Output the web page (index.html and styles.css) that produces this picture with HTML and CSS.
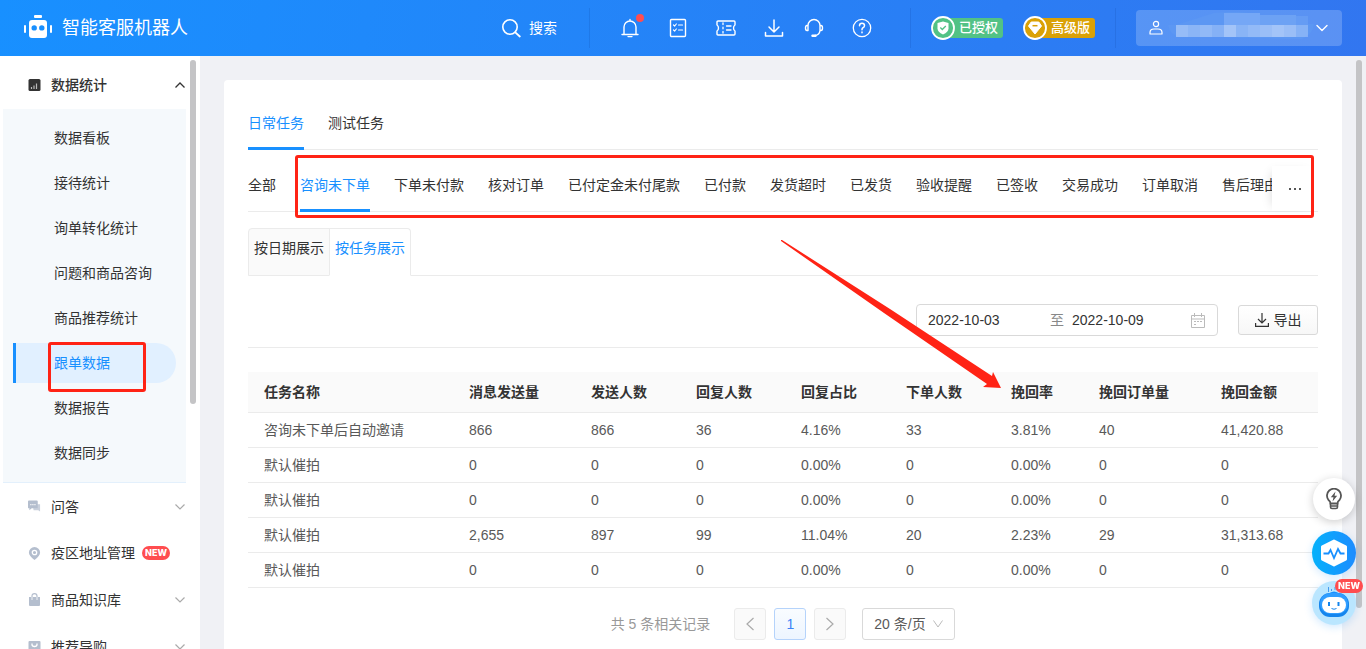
FILE: index.html
```html
<!DOCTYPE html>
<html lang="zh-CN">
<head>
<meta charset="utf-8">
<title>智能客服机器人</title>
<link rel="stylesheet" href="styles.css">
</head>
<body>
<header class="topbar">
  <a class="brand" href="#">
    <svg width="28" height="26" viewBox="0 1 28 26" fill="#fff"><rect x="10" y="1" width="8" height="3" rx="1"/><rect x="0" y="11" width="2" height="8" rx="1"/><rect x="26" y="11" width="2" height="8" rx="1"/><path fill-rule="evenodd" d="M8 6h12a3 3 0 0 1 3 3v12a3 3 0 0 1-3 3H8a3 3 0 0 1-3-3V9a3 3 0 0 1 3-3zm2.200 5.200a2.700 2.700 0 1 0 0 5.400 2.700 2.700 0 0 0 0-5.400zm7.600 0a2.700 2.700 0 1 0 0 5.400 2.700 2.700 0 0 0 0-5.400z"/></svg>
    <span>智能客服机器人</span>
  </a>
  <button class="search" type="button">
    <svg width="20" height="20" viewBox="0 0 20 20" class="line"><circle cx="9" cy="9" r="7.200" stroke-width="1.600"/><path d="M14.300 14.300l4.500 4.200" stroke-width="1.800"/></svg>
    <span>搜索</span>
  </button>
  <i class="split"></i>
  <nav class="tools">
    <button type="button" class="tool" aria-label="通知">
      <svg width="20" height="20" viewBox="0 0 20 20" class="line"><path d="M2 16.500h16M4 16.300V9a6 6 0 0 1 12 0v7.300M10 3V1.500M8 18.600h4" stroke-width="1.400"/></svg>
      <i class="dot"></i>
    </button>
    <button type="button" class="tool" aria-label="任务">
      <svg width="20" height="20" viewBox="0 0 20 20" class="line"><rect x="2.500" y="1.500" width="15" height="17" rx="1" stroke-width="1.400"/><path d="M5.500 7l1.200 1 1.600-2M10.500 7h4M5.500 12l1.200 1 1.600-2M10.500 12h4" stroke-width="1.200"/></svg>
    </button>
    <button type="button" class="tool" aria-label="卡券">
      <svg width="20" height="20" viewBox="0 0 20 20" class="line"><path d="M2 3h16q1 0 1 1v3q-1.500.8-1.500 3t1.500 3v3q0 1-1 1H2q-1 0-1-1v-3q1.500-.8 1.500-3T1 7V4q0-1 1-1z" stroke-width="1.400"/><path d="M7 5v1.500M7 9.200v1.600M7 13.500V15M10.500 8h4.500M10.500 12h4.500" stroke-width="1.300"/></svg>
    </button>
    <button type="button" class="tool" aria-label="下载">
      <svg width="20" height="20" viewBox="0 0 20 20" class="line"><path d="M10 2v12M5 9l5 5 5-5M1.500 14.500v3.500h17v-3.500" stroke-width="1.500"/></svg>
    </button>
    <button type="button" class="tool near" aria-label="客服">
      <svg width="20" height="20" viewBox="0 0 20 20" class="line"><path d="M4 12.500V7.500a6 6 0 0 1 12 0v5M4 7.500H3Q1.500 7.500 1.500 10T3 12.500h1M16 7.500h1q1.500 0 1.500 2.500T17 12.500h-1Q15.500 17 11 17.500" stroke-width="1.400"/><path d="M8.500 17.700h3" stroke-width="2.400"/></svg>
    </button>
    <button type="button" class="tool" aria-label="帮助">
      <svg width="20" height="20" viewBox="0 0 20 20" class="line"><circle cx="10" cy="10" r="8.700" stroke-width="1.300"/><path d="M7.500 7.700q0-2.500 2.500-2.500t2.500 2.300q0 1.500-1.500 2.200-1 .6-1 2M10 14v.8" stroke-width="1.500"/></svg>
    </button>
  </nav>
  <i class="split"></i>
  <div class="levels">
    <span class="level green">
      <svg width="24" height="24" viewBox="0 0 24 24"><circle cx="12" cy="12" r="11" fill="#52c285" stroke="#fff" stroke-width="1.800"/><path d="M12 5.500l5.500 1.500v5.500q0 3.500-5.500 6-5.500-2.500-5.500-6V7z" fill="#fff"/><path d="M9.300 11.500l2 2 3.500-3.500" fill="none" stroke="#52c285" stroke-width="1.300"/></svg>
      <span>已授权</span>
    </span>
    <span class="level gold">
      <svg width="24" height="24" viewBox="0 0 24 24"><circle cx="12" cy="12" r="11" fill="#daa106" stroke="#fff" stroke-width="1.800"/><path d="M8.200 6h7.600l2.700 4-6.500 8-6.500-8z" fill="#fff" stroke="#fff" stroke-linejoin="round"/><path d="M9.500 9.700h5" stroke="#daa106" stroke-width="1.500"/></svg>
      <span>高级版</span>
    </span>
  </div>
  <i class="split"></i>
  <button type="button" class="user" aria-label="账户">
    <svg width="14" height="16" viewBox="0 0 14 16" class="line"><circle cx="7" cy="4" r="2.600" stroke-width="1.200"/><path d="M1 14v-1.500Q1 9 5 9h4q4 0 4 3.500V14z" stroke-width="1.200"/></svg>
    <svg class="masked" width="148" height="32" viewBox="0 1 148 32"><path d="M2 14H10L48 2Q76-1 92 4L142 6V13H148Q147 23 136 28H120L52 26H14Q4 24 2 14z" fill="#5c97f3"/><path d="M58 2h36v12H58z" fill="#75a7f6"/><path d="M94 4h36v10H94z" fill="#6da2f4"/><path d="M130 5h12v9h-12z" fill="#659cf4"/><g fill="#fff"><path d="M10 14h12v12H10z" opacity=".36"/><path d="M22 14h12v12H22z" opacity=".29"/><path d="M34 14h12v12H34z" opacity=".33"/><path d="M46 14h12v12H46z" opacity=".25"/><path d="M58 14h12v12H58z" opacity=".44"/><path d="M70 14h12v12H70z" opacity=".28"/><path d="M82 14h12v12H82z" opacity=".34"/><path d="M94 14h12v12H94z" opacity=".38"/><path d="M106 14h12v12H106z" opacity=".44"/><path d="M118 14h12v12H118z" opacity=".38"/><path d="M130 14h12v12H130z" opacity=".26"/></g></svg>
    <svg width="12" height="8" viewBox="0 0 12 8" class="line"><path d="M1 1.500l5 5 5-5" stroke-width="1.400"/></svg>
  </button>
</header>

<div class="body">
  <aside class="side">
    <nav class="menu">
      <button type="button" class="group open">
        <svg width="12" height="12" viewBox="0 0 12 12"><rect width="12" height="12" rx="1.500" fill="#333"/><path d="M3 8v2M5.500 6.500V10M8 4.500V10" stroke="#bbb" stroke-width="1.200"/></svg>
        <span>数据统计</span>
        <svg class="caret" width="10" height="6" viewBox="0 0 10 6"><path d="M.5 5.500L5 1l4.500 4.500" fill="none" stroke="#333" stroke-width="1.300"/></svg>
      </button>
      <div class="sub">
        <a href="#">数据看板</a>
        <a href="#">接待统计</a>
        <a href="#">询单转化统计</a>
        <a href="#">问题和商品咨询</a>
        <a href="#">商品推荐统计</a>
        <a href="#" class="on">跟单数据<i class="mark"></i></a>
        <a href="#">数据报告</a>
        <a href="#">数据同步</a>
      </div>
      <button type="button" class="group">
        <svg width="14" height="13" viewBox="0 0 14 13"><path d="M5 4h8v8l-2-1.500H6z" fill="#c9d0dc"/><path d="M1 0h8.500q1 0 1 1v6.500q0 1-1 1H4L1.500 10.500v-2H1q-1 0-1-1V1q0-1 1-1z" fill="#b4bece"/><path d="M2.500 4.500h1.200M4.700 4.500h1.200M6.900 4.500h1.200" stroke="#fff" stroke-width="1.200"/></svg>
        <span>问答</span>
        <svg class="caret" width="10" height="6" viewBox="0 0 10 6"><path d="M.5.5L5 5 9.500.5" fill="none" stroke="#aaa" stroke-width="1.200"/></svg>
      </button>
      <a class="group short" href="#">
        <svg width="12" height="13" viewBox="0 0 12 13"><path d="M6 0a5.600 5.600 0 0 1 5.600 5.600Q11.600 9 6 13 .4 9 .4 5.600A5.600 5.600 0 0 1 6 0z" fill="#b4bece"/><circle cx="6" cy="5.500" r="2.200" fill="none" stroke="#fff" stroke-width="1.300"/></svg>
        <span>疫区地址管理</span><b class="new">NEW</b>
      </a>
      <button type="button" class="group">
        <svg width="12" height="13" viewBox="0 0 12 13"><path d="M.5 4h11v8q0 1-1 1h-9q-1 0-1-1z" fill="#b4bece"/><path d="M3.500 7V3q0-2.300 2.500-2.300T8.500 3v4" fill="none" stroke="#b4bece" stroke-width="1.200"/><path d="M3.500 4v3M8.500 4v3" stroke="#fff" stroke-width=".8"/></svg>
        <span>商品知识库</span>
        <svg class="caret" width="10" height="6" viewBox="0 0 10 6"><path d="M.5.5L5 5 9.500.5" fill="none" stroke="#aaa" stroke-width="1.200"/></svg>
      </button>
      <button type="button" class="group">
        <svg width="12" height="12" viewBox="0 0 12 12"><rect width="12" height="12" rx="1" fill="#b4bece"/><path d="M3.500 2.500v1q0 2 2.500 2t2.500-2v-1" fill="none" stroke="#fff" stroke-width="1.300"/></svg>
        <span>推荐导购</span>
        <svg class="caret" width="10" height="6" viewBox="0 0 10 6"><path d="M.5.5L5 5 9.500.5" fill="none" stroke="#aaa" stroke-width="1.200"/></svg>
      </button>
    </nav>
    <i class="thumb"></i>
  </aside>

  <main class="main">
    <section class="card">
      <div class="tabs">
        <button type="button" class="tab on">日常任务</button>
        <button type="button" class="tab">测试任务</button>
      </div>
      <div class="tabs types">
        <div class="scroller">
          <button type="button" class="tab">全部</button>
          <button type="button" class="tab on">咨询未下单</button>
          <button type="button" class="tab">下单未付款</button>
          <button type="button" class="tab">核对订单</button>
          <button type="button" class="tab">已付定金未付尾款</button>
          <button type="button" class="tab">已付款</button>
          <button type="button" class="tab">发货超时</button>
          <button type="button" class="tab">已发货</button>
          <button type="button" class="tab">验收提醒</button>
          <button type="button" class="tab">已签收</button>
          <button type="button" class="tab">交易成功</button>
          <button type="button" class="tab">订单取消</button>
          <button type="button" class="tab">售后理由</button>
        </div>
        <button type="button" class="more" aria-label="更多"><svg width="12" height="2" viewBox="0 0 12 2"><path d="M0 0h2v2H0zM5 0h2v2H5zM10 0h2v2h-2z" fill="#555"/></svg></button>
        <i class="mark"></i>
      </div>
      <div class="views">
        <button type="button" class="view">按日期展示</button>
        <button type="button" class="view on">按任务展示</button>
        <span class="rest"></span>
      </div>
      <div class="filter">
        <div class="range">
          <input type="text" value="2022-10-03" aria-label="开始日期">
          <span>至</span>
          <input type="text" value="2022-10-09" aria-label="结束日期">
          <svg width="14" height="15" viewBox="0 0 14 15"><path d="M.5 2.500h13v12H.5zM.5 6h13M3.500 0v4M10.500 0v4" fill="none" stroke="#bbb"/><path d="M3 8.500h2M6 8.500h2M9 8.500h2M3 11.500h2" stroke="#bbb" stroke-width="1.200"/></svg>
        </div>
        <button type="button" class="export">
          <svg width="14" height="14" viewBox="0 0 14 14"><path d="M7 0v10M3 6l4 4 4-4M.6 10v3.300h12.800V10" fill="none" stroke="#333" stroke-width="1.200"/></svg>
          <span>导出</span>
        </button>
      </div>
      <table class="grid">
        <colgroup><col class="c-name"><col class="c-wide"><col class="c-mid"><col class="c-mid"><col class="c-mid"><col class="c-mid"><col class="c-thin"><col class="c-wide"><col></colgroup>
        <thead><tr><th>任务名称</th><th>消息发送量</th><th>发送人数</th><th>回复人数</th><th>回复占比</th><th>下单人数</th><th>挽回率</th><th>挽回订单量</th><th>挽回金额</th></tr></thead>
        <tbody>
          <tr><td>咨询未下单后自动邀请</td><td>866</td><td>866</td><td>36</td><td>4.16%</td><td>33</td><td>3.81%</td><td>40</td><td>41,420.88</td></tr>
          <tr><td>默认催拍</td><td>0</td><td>0</td><td>0</td><td>0.00%</td><td>0</td><td>0.00%</td><td>0</td><td>0</td></tr>
          <tr><td>默认催拍</td><td>0</td><td>0</td><td>0</td><td>0.00%</td><td>0</td><td>0.00%</td><td>0</td><td>0</td></tr>
          <tr><td>默认催拍</td><td>2,655</td><td>897</td><td>99</td><td>11.04%</td><td>20</td><td>2.23%</td><td>29</td><td>31,313.68</td></tr>
          <tr><td>默认催拍</td><td>0</td><td>0</td><td>0</td><td>0.00%</td><td>0</td><td>0.00%</td><td>0</td><td>0</td></tr>
        </tbody>
      </table>
      <div class="pager">
        <span class="total">共 5 条相关记录</span>
        <button type="button" class="page" aria-label="上一页"><svg width="10" height="14" viewBox="0 0 10 14"><path d="M8.500 1L2 7l6.500 6" fill="none" stroke="#aaa" stroke-width="1.200"/></svg></button>
        <button type="button" class="page on">1</button>
        <button type="button" class="page" aria-label="下一页"><svg width="10" height="14" viewBox="0 0 10 14"><path d="M1.500 1L8 7l-6.500 6" fill="none" stroke="#aaa" stroke-width="1.200"/></svg></button>
        <label class="size">
          <select aria-label="每页条数"><option>20 条/页</option></select>
          <svg width="10" height="8" viewBox="0 0 10 8"><path d="M.5.5L5 7 9.500.5" fill="none" stroke="#bbb"/></svg>
        </label>
      </div>
      <svg class="arrow" width="222" height="152" viewBox="0 0 222 152"><path d="M1 0L2 0 110 69 212 136 213 132 221 148 203 147 207 144 104 73 1 1Z" fill="#ff2315"/></svg>
    </section>
    <i class="thumb"></i>
  </main>
</div>

<div class="floats">
  <button type="button" class="float white" aria-label="建议">
    <svg width="18" height="22" viewBox="0 0 18 22"><path d="M5.500 15.500Q5.500 13.500 3.500 12A7 7 0 1 1 14.500 12Q12.500 13.500 12.500 15.500z" fill="none" stroke="#555" stroke-width="1.800"/><path d="M5.500 15v4q0 1.500 1.500 1.500h4q1.500 0 1.500-1.500v-4M6 18h6" fill="none" stroke="#555" stroke-width="1.600"/><path d="M10.500 3.500L5.800 9.200h2.700L7.500 13.500l4.700-5.700H9.500z" fill="#555"/></svg>
  </button>
  <button type="button" class="float blue" aria-label="诊断">
    <svg width="28" height="28" viewBox="0 0 28 28"><path d="M14 2l11.500 5.800v12.400L14 26 2.500 20.200V7.800z" fill="#fff" stroke="#fff" stroke-width="3" stroke-linejoin="round"/><path d="M3.500 14.500H8.500l2-3.500 3.500 8 4-9 2.500 4.500h4" fill="none" stroke="#1890ff" stroke-width="1.800"/></svg>
  </button>
  <button type="button" class="float bot" aria-label="机器人助手">
    <svg width="32" height="32" viewBox="0 0 32 32"><path d="M10.500 0v5M13.500 2v2M17 0v3" stroke="#459bef"/><path d="M10 7q6-5 12 0" fill="#1690ff"/><rect x="1" y="6" width="30" height="24" rx="11" fill="#1485ed"/><rect x="2" y="6" width="28" height="21" rx="10" fill="#2f9dff"/><rect x="4" y="10" width="24" height="16" rx="8" fill="#fff"/><path d="M11 15v4M20.500 15v4" stroke="#1485ed" stroke-width="2"/><path d="M13.500 21.500q2.500 1.500 5 0" fill="none" stroke="#1485ed"/></svg>
    <b class="new">NEW</b>
  </button>
</div>
</body>
</html>
```
FILE: styles.css
```css
* { box-sizing: border-box; }
body {
  margin: 0;
  height: 100vh;
  display: flex;
  flex-direction: column;
  overflow: hidden;
  background: #f0f1f5;
  color: #333;
  font: 14px/22px "Liberation Sans", "Noto Sans CJK SC", sans-serif;
}
button, input, select { font: inherit; color: inherit; border: 0; padding: 0; background: none; }
button { cursor: pointer; white-space: nowrap; }
a { color: inherit; text-decoration: none; }
svg { display: block; flex: none; }
.line { fill: none; stroke: #fff; stroke-linecap: round; stroke-linejoin: round; }

.topbar {
  flex: none;
  height: 56px;
  padding: 0 24px;
  display: flex;
  align-items: center;
  color: #fff;
  background: linear-gradient(100deg, #1890ff, #3276f0);
}
.brand { display: flex; align-items: center; gap: 10px; font-size: 18px; margin-right: auto; }
.search { display: flex; align-items: center; gap: 8px; margin-right: 32px; }
.split { flex: none; width: 1px; height: 40px; background: rgba(0, 40, 120, .12); }
.tools { display: flex; gap: 28px; margin: 0 38px 0 30px; }
.tool { position: relative; width: 20px; }
.tool.near { margin-left: -8px; }
.dot { position: absolute; top: -4px; right: -4px; width: 8px; height: 8px; border-radius: 50%; background: #ff4d4f; }
.levels { display: flex; gap: 20px; margin: 0 20px; }
.level { display: flex; align-items: center; width: 72px; font-size: 13px; font-weight: 500; line-height: 20px; }
.level > svg { position: relative; }
.level > span { flex: 1; margin-left: -12px; padding-left: 16px; border-radius: 3px; white-space: nowrap; }
.green > span { background: #52c285; }
.gold > span { background: #daa106; }
.user {
  display: flex;
  align-items: center;
  width: 206px;
  height: 36px;
  margin-left: 20px;
  padding: 0 14px 0 13px;
  border-radius: 4px;
  background: rgba(255, 255, 255, .2);
}
.masked { margin: 0 auto 0 3px; }

.body { flex: 1; min-height: 0; display: flex; }
.side { position: relative; flex: none; width: 200px; overflow: hidden; background: #fff; }
.menu { padding: 5px 14px 0 3px; }
.group { display: flex; align-items: center; width: 100%; height: 47px; padding: 0 1px 0 25px; text-align: left; }
.group > svg:first-child { width: 13px; margin-right: 10px; }
.group .caret { margin-left: auto; }
.group.short { height: 46px; }
.group.open { height: 48px; font-weight: 500; }
.sub { display: flex; flex-direction: column; gap: 5px; padding: 9px 10px; background: #f5f9fc; border-bottom: 1px solid #e3f0fc; }
.sub a { height: 40px; padding-left: 38px; border-left: 3px solid transparent; line-height: 40px; }
.sub .on { position: relative; color: #1890ff; background: #e1f0ff; border-left-color: #1890ff; border-radius: 0 20px 20px 0; }
.sub .mark { left: 32px; top: -1px; width: 98px; height: 50px; }
.mark { position: absolute; border: 3px solid #ff2315; border-radius: 3px; pointer-events: none; }
.new {
  height: 14px;
  padding: 0 3px;
  border-radius: 7px;
  color: #fff;
  background: #ff4d4f;
  font: 800 9px/14px Inter, sans-serif;
}
.group .new { margin-left: 7px; }
.thumb { position: absolute; right: 4px; top: 4px; width: 6px; border-radius: 3px; background: #c4c4c6; }
.side .thumb { height: 344px; }
.main .thumb { height: 548px; }

.main { position: relative; flex: 1; min-width: 0; padding: 24px 24px 0; overflow: hidden; }
.card { position: relative; min-height: 100%; padding: 24px; border-radius: 4px; background: #fff; }
.tabs { display: flex; gap: 24px; border-bottom: 1px solid #ebebeb; }
.tab { flex: none; height: 46px; margin-bottom: -1px; padding: 8px 0 13px; border-bottom: 3px solid transparent; }
.tab.on { color: #1890ff; border-color: #1890ff; }
.types { position: relative; gap: 0; margin-top: 16px; }
.scroller { flex: 1; min-width: 0; display: flex; gap: 24px; overflow: hidden; margin-bottom: -1px; }
.scroller .tab { margin-bottom: 0; }
.more { position: relative; display: flex; align-items: center; justify-content: center; width: 46px; height: 45px; background: #fff; box-shadow: -6px 0 10px -6px rgba(0, 0, 0, .15); }
.types .mark { left: 47px; right: 4px; top: -11px; bottom: -7px; }
.views { display: flex; margin-top: 16px; }
.view { height: 48px; padding: 8px 5px 16px; border: 1px solid #ebebeb; border-radius: 4px 0 0 0; background: #fafafa; }
.view.on { margin-left: -1px; color: #1890ff; background: #fff; border-bottom-color: #fff; border-radius: 0 4px 0 0; }
.rest { flex: 1; border-bottom: 1px solid #ebebeb; }
.filter { display: flex; align-items: center; justify-content: flex-end; gap: 20px; padding: 28px 0 11px; border-bottom: 1px solid #ebebeb; }
.range { display: flex; align-items: center; width: 302px; height: 32px; padding: 0 12px 0 11px; border: 1px solid #d9d9d9; border-radius: 4px; }
.range input { width: 112px; outline: none; }
.range span { flex: none; width: 32px; padding-left: 10px; color: #888; }
.range svg { margin-left: auto; }
.export { display: flex; align-items: center; justify-content: center; gap: 5px; width: 80px; height: 30px; border: 1px solid #d9d9d9; border-radius: 3px; background: linear-gradient(#fff, #f7f7f7); }

.grid { width: 100%; margin-top: 24px; table-layout: fixed; border-collapse: separate; border-spacing: 0; text-align: left; }
.grid th, .grid td { padding: 6px 0 6px 16px; border-bottom: 1px solid #ebebeb; white-space: nowrap; }
.grid th { padding: 9px 0 9px 16px; background: #fafafa; font-weight: 700; }
.grid td { color: #595959; }
.c-name { width: 205px; }
.c-wide { width: 122px; }
.c-mid { width: 105px; }
.c-thin { width: 88px; }

.pager { display: flex; align-items: center; justify-content: center; gap: 8px; margin-top: 20px; }
.total { margin-right: 16px; color: #999; }
.page { display: flex; align-items: center; justify-content: center; width: 32px; height: 32px; border: 1px solid #ebebeb; border-radius: 3px; background: #fafafa; }
.page.on { color: #3b82f6; border-color: #b5d3fb; background: linear-gradient(#f9fcff, #edf5ff); }
.size { position: relative; display: flex; align-items: center; margin-left: 8px; }
.size select { appearance: none; width: 93px; height: 32px; padding: 0 24px 0 11px; border: 1px solid #d9d9d9; border-radius: 3px; color: #595959; background: #fff; }
.size svg { position: absolute; right: 12px; pointer-events: none; }
.arrow { position: absolute; left: 556px; top: 160px; pointer-events: none; }

.floats { position: fixed; right: 10px; bottom: 24px; display: flex; flex-direction: column; align-items: center; gap: 11px; }
.float { position: relative; display: flex; align-items: center; justify-content: center; width: 44px; height: 44px; border-radius: 50%; }
.float.white { width: 42px; height: 42px; background: #fff; box-shadow: 0 2px 10px rgba(0, 0, 0, .2); }
.float.blue { background: linear-gradient(90deg, #04b1fb, #1d8cff); box-shadow: 0 2px 8px rgba(24, 144, 255, .2); }
.float.bot { margin-top: -5px; background: #bae6ff; box-shadow: 0 2px 8px rgba(24, 144, 255, .2); }
.float .new { position: absolute; top: -2px; right: -7px; }
```
